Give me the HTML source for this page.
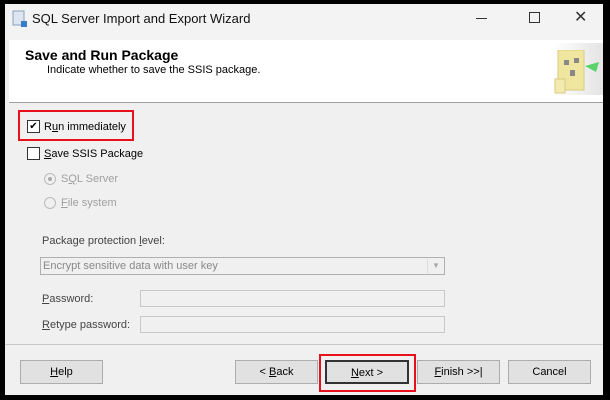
<!DOCTYPE html>
<html><head><style>
body{margin:0;width:610px;height:400px;background:#000;position:relative;overflow:hidden;font-family:"Liberation Sans",sans-serif;font-size:11px;color:#000}
.a{position:absolute}
.win{left:5px;top:4px;width:598px;height:391px;background:#f0f0f0}
.btn{position:absolute;top:360px;height:24px;background:#e1e1e1;border:1px solid #adadad;box-sizing:border-box;text-align:center;line-height:22px;font-size:11px}
.fld{position:absolute;background:#f0f0f0;border:1px solid #c8c8c8;box-sizing:border-box}
.dis{color:#a0a0a0}
u{text-decoration:underline}
</style></head><body>
<div class="a win"></div>
<div class="a" style="left:5px;top:4px;width:598px;height:36px;background:#f3f3f3"></div>
<svg class="a" style="left:12px;top:10px" width="16" height="18"><rect x="1" y="1" width="11" height="14" fill="#dde6f0" stroke="#8aa0b8"/><rect x="9" y="11" width="6" height="6" fill="#3b7dc8"/></svg>
<div class="a" style="left:32px;top:11px;font-size:13px;color:#111">SQL Server Import and Export Wizard</div>
<div class="a" style="left:476px;top:18px;width:11px;height:1px;background:#333"></div>
<div class="a" style="left:529px;top:12px;width:9px;height:9px;border:1px solid #333"></div>
<div class="a" style="left:574px;top:7px;font-size:16px;color:#333">✕</div>
<div class="a" style="left:9px;top:40px;width:594px;height:62px;background:#fff"></div>
<div class="a" style="left:552px;top:43px;width:51px;height:52px;background:linear-gradient(90deg,#fff,#e4e4e4)"></div>
<svg class="a" style="left:552px;top:50px" width="51" height="45"><rect x="6" y="0" width="26" height="40" fill="#f0e6a0" stroke="#d8cc80"/><rect x="3" y="29" width="10" height="14" fill="#f3eab0" stroke="#d8cc80"/><rect x="12" y="10" width="5" height="5" fill="#888"/><rect x="18" y="20" width="5" height="6" fill="#888"/><rect x="22" y="8" width="5" height="5" fill="#888"/><path d="M33 16 L47 12 L44 22 Z" fill="#5bd26a"/></svg>
<div class="a" style="left:25px;top:47px;font-size:14px;font-weight:bold">Save and Run Package</div>
<div class="a" style="left:47px;top:64px;font-size:11px">Indicate whether to save the SSIS package.</div>
<div class="a" style="left:9px;top:102px;width:594px;height:1px;background:#a0a0a0"></div>
<div class="a" style="left:18px;top:110px;width:112px;height:27px;border:2px solid #e8101c"></div>
<div class="a" style="left:27px;top:120px;width:11px;height:11px;border:1px solid #333;background:#fff;font-size:10px;line-height:11px;text-align:center">✔</div>
<div class="a" style="left:44px;top:121px">R<u>u</u>n immediately</div>
<div class="a" style="left:27px;top:147px;width:11px;height:11px;border:1px solid #333;background:#fff"></div>
<div class="a" style="left:44px;top:148px"><u>S</u>ave SSIS Package</div>
<div class="a" style="left:44px;top:173px;width:10px;height:10px;border-radius:50%;border:1px solid #bbb;background:#f0f0f0"></div>
<div class="a" style="left:48px;top:177px;width:4px;height:4px;border-radius:50%;background:#aaa"></div>
<div class="a dis" style="left:61px;top:173px">S<u>Q</u>L Server</div>
<div class="a" style="left:44px;top:197px;width:10px;height:10px;border-radius:50%;border:1px solid #bbb"></div>
<div class="a dis" style="left:61px;top:197px"><u>F</u>ile system</div>
<div class="a" style="left:42px;top:235px;color:#444">Package protection <u>l</u>evel:</div>
<div class="fld" style="left:40px;top:257px;width:405px;height:18px;border-color:#b0b0b0"></div>
<div class="a dis" style="left:43px;top:260px;color:#888">Encrypt sensitive data with user key</div>
<div class="a" style="left:427px;top:259px;width:16px;height:14px;border-left:1px solid #ddd;text-align:center;font-size:8px;color:#aaa;line-height:14px">▼</div>
<div class="a" style="left:42px;top:293px;color:#444"><u>P</u>assword:</div>
<div class="fld" style="left:140px;top:290px;width:305px;height:17px"></div>
<div class="a" style="left:42px;top:319px;color:#444"><u>R</u>etype password:</div>
<div class="fld" style="left:140px;top:316px;width:305px;height:17px"></div>
<div class="a" style="left:5px;top:344px;width:598px;height:1px;background:#c8c8c8"></div>
<div class="btn" style="left:20px;width:83px"><u>H</u>elp</div>
<div class="btn" style="left:235px;width:83px">&lt; <u>B</u>ack</div>
<div class="a" style="left:319px;top:354px;width:93px;height:34px;border:2px solid #e8101c"></div>
<div class="btn" style="left:325px;width:84px;border:2px solid #333"><u>N</u>ext &gt;</div>
<div class="btn" style="left:417px;width:83px"><u>F</u>inish &gt;&gt;|</div>
<div class="btn" style="left:508px;width:83px">Cancel</div>
</body></html>
